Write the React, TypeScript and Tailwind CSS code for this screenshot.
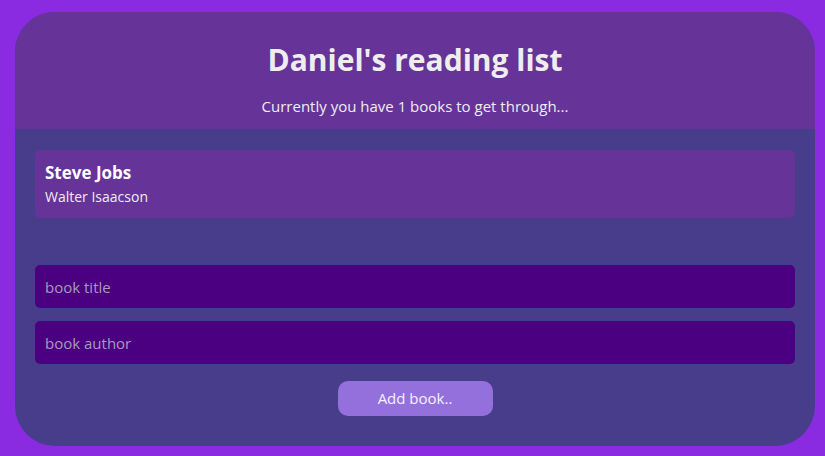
import { useState } from "react"

type Book = { title: string; author: string }

export default function App() {
  const [books] = useState<Book[]>([{ title: "Steve Jobs", author: "Walter Isaacson" }])

  return (
    <div
      className="h-[456px] w-full bg-[#8a2be2] pl-[15px] pr-[10px] pt-[12px] pb-[10px]"
      style={{ fontFamily: '"Open Sans", "Noto Sans", sans-serif' }}
    >
      <div className="flex h-full flex-col overflow-hidden rounded-[40px] bg-[#483d8b]">
        {/* Header */}
        <div className="flex h-[117px] flex-col items-center bg-[#663399] pt-[28px] text-[#eeeeee]">
          <h1 className="text-[30px] leading-[40px] font-bold">Daniel's reading list</h1>
          <p className="mt-[16px] text-[15px] leading-[20px]">
            Currently you have {books.length} books to get through...
          </p>
        </div>

        {/* List */}
        <div className="flex flex-col gap-3 px-5 pt-[21px]">
          {books.map((b) => (
            <div key={b.title} className="h-[68px] rounded-[5px] bg-[#663399] px-[10px] pt-[12px] text-white">
              <div className="text-[17px] leading-[22px] font-bold">{b.title}</div>
              <div className="mt-[3px] text-[14px] leading-[20px] text-[#eeeeee]">{b.author}</div>
            </div>
          ))}
        </div>

        {/* Form */}
        <div className="mt-[47px] flex flex-col gap-[13px] px-5">
          <input
            placeholder="book title"
            className="h-[43px] rounded-[5px] bg-[#4b0082] px-[10px] text-[15px] text-white outline-none placeholder:text-[#a79bbd]"
          />
          <input
            placeholder="book author"
            className="h-[43px] rounded-[5px] bg-[#4b0082] px-[10px] text-[15px] text-white outline-none placeholder:text-[#a79bbd]"
          />
          <div className="mt-[4px] flex justify-center">
            <button className="h-[35px] w-[155px] rounded-[10px] bg-[#9370db] text-[15px] text-[#f4f0ff]">
              Add book..
            </button>
          </div>
        </div>
      </div>
    </div>
  )
}
